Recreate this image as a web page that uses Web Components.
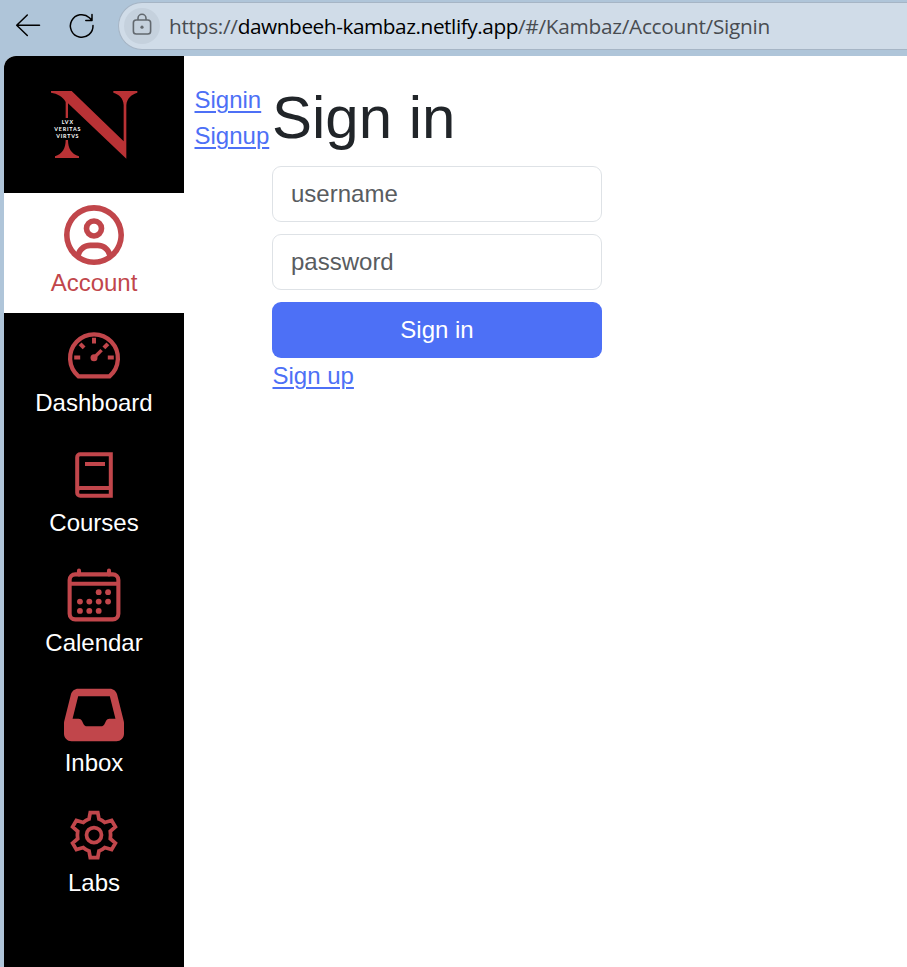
<!DOCTYPE html>
<html lang="en">
<head>
<meta charset="utf-8">
<title>Kambaz</title>
<style>
html,body{margin:0;height:100%;overflow:hidden}
body{font-family:"Liberation Sans",Arial,sans-serif;font-size:24px;line-height:36px;color:#212529;background:#afc5d9}
</style>
</head>
<body>
<kambaz-app></kambaz-app>
<script>
const define = (name, html) => customElements.define(name, class extends HTMLElement {
  constructor() {
    super();
    const t = document.createElement('template');
    t.innerHTML = html;
    this.attachShadow({ mode: 'open' }).appendChild(t.content.cloneNode(true));
  }
});

define('browser-bar', `<style>
:host{display:flex;height:56px;box-sizing:border-box;padding:2px 0 6px;background:#afc5d9;overflow:hidden}
.nav{flex:none;width:118px;height:48px}
.address{flex:1;display:flex;align-items:center;box-sizing:border-box;height:48px;border:1.5px solid #a6b5c5;border-right:0;border-radius:24px 0 0 24px;background:#d0dce8;padding-left:5px}
.lock{flex:none;width:36px;height:36px}
.url{margin-left:9px;font:20.8px/32px "Open Sans","Noto Sans",sans-serif;letter-spacing:-.28px;color:#484c51;white-space:nowrap}
b{font-weight:400;color:#000;letter-spacing:-.44px}
</style>
<svg class="nav" viewBox="0 2 118 48" fill="none" stroke="#000" stroke-width="1.5" stroke-linecap="round" stroke-linejoin="round"><path d="M39.5 25.2H16.8M27.3 15 16.7 25.2 27.3 35.5"/><path d="M93 25.5a11.3 11.3 0 1 1-3.6-7.8l2.5 2.6M92 14.6v5.9h-6.2"/></svg>
<div class="address">
<svg class="lock" viewBox="0 0 36 36" fill="none" stroke="#62686e" stroke-width="1.6"><circle cx="18" cy="18" r="18" fill="#c5d1dd" stroke="none"/><rect x="9.4" y="12" width="17.2" height="14" rx="2.8"/><path d="M14 12v-1.7a4 4 0 0 1 8 0v1.7"/><circle cx="18" cy="19.2" r="1.6" fill="#62686e" stroke="none"/></svg>
<span class="url">https://<b>dawnbeeh-kambaz.netlify.app</b>/#/Kambaz/Account/Signin</span>
</div>`);

define('brand-logo', `<style>
:host{display:block;height:137px;padding-left:36px;box-sizing:border-box;padding-top:24px}
svg{display:block;width:110px;height:90px}
text{font:700 16px "Lato",sans-serif;fill:#fff;text-anchor:middle}
</style>
<svg viewBox="0 0 330 270"><path fill="#b93235" d="M33 33H95L251 184V75C250 54 237 43 220 38V33H292V38C275 43 261 54 259 75V236L84 70V114H77V66C69 49 52 41 33 38ZM77 180H84C84 205 94 222 117 229V234H45V229C67 222 77 205 77 180Z"/>
<text x="82" y="133" textLength="34">LVX</text><text x="82" y="154" textLength="79">VERITAS</text><text x="82" y="174" textLength="67">VIRTVS</text></svg>`);

define('nav-item', `<style>
:host{display:flex;flex-direction:column;align-items:center;height:120px;box-sizing:border-box;padding-top:12px;color:#fff}
:host([active]){background:#fff;color:#c1464b}
.icon{width:60px;height:60px;color:#c1464b}
::slotted(svg){display:block;width:60px;height:60px}
</style><div class="icon"><slot name="icon"></slot></div><span><slot></slot></span>`);

define('side-nav', `<style>
:host{display:block;width:180px;background:#000;flex:none}
</style>
<brand-logo></brand-logo>
<nav-item active><svg slot="icon" viewBox="0 0 512 512" fill="currentColor"><path d="M406.5 399.6C387.4 352.9 341.5 320 288 320H224c-53.5 0-99.4 32.9-118.5 79.6C69.9 362.2 48 311.7 48 256C48 141.1 141.1 48 256 48s208 93.1 208 208c0 55.7-21.9 106.2-57.5 143.6zm-40.1 32.7C334.4 452.4 296.6 464 256 464s-78.4-11.6-110.5-31.7c7.3-36.7 39.7-64.3 78.5-64.3h64c38.8 0 71.2 27.6 78.5 64.3zM256 512A256 256 0 1 0 256 0a256 256 0 1 0 0 512zm0-272a40 40 0 1 1 0-80 40 40 0 1 1 0 80zm-88-40a88 88 0 1 0 176 0 88 88 0 1 0-176 0z"/></svg>Account</nav-item>
<nav-item><svg slot="icon" viewBox="0 0 60 60" fill="none" stroke="currentColor" stroke-width="4.3" stroke-linejoin="round"><path d="M14.5 51.4A23.9 23.9 0 1 1 45.5 51.4Z"/><path stroke-width="4" d="M30 12.8v5.8M10.2 32.5h6M43.8 32.5h6M16.1 18.8l4 4M43.9 18.8l-4 4"/><path stroke-width="3.4" d="M30 32.7l7.6-7.6"/><circle cx="30" cy="32.8" r="3.5" fill="currentColor" stroke="none"/></svg>Dashboard</nav-item>
<nav-item><svg slot="icon" viewBox="0 0 60 60" fill="none" stroke="currentColor" stroke-width="4"><path d="M46.8 9.2H16.2a3 3 0 0 0-3 3V47.8a3 3 0 0 0 3 3H46.8ZM46.8 43.1H16.2a3 3 0 0 0-3 3M21 18.9H41"/></svg>Courses</nav-item>
<nav-item><svg slot="icon" viewBox="0 0 512 512" fill="none" stroke="currentColor" stroke-width="35"><rect x="48" y="80" width="416" height="384" rx="48"/><path d="M48 160H464"/><path stroke-linecap="round" d="M128 48v32M384 48v32"/><g fill="currentColor" stroke="none"><circle cx="296" cy="232" r="25"/><circle cx="376" cy="232" r="25"/><circle cx="136" cy="312" r="25"/><circle cx="216" cy="312" r="25"/><circle cx="296" cy="312" r="25"/><circle cx="376" cy="312" r="25"/><circle cx="136" cy="392" r="25"/><circle cx="216" cy="392" r="25"/><circle cx="296" cy="392" r="25"/></g></svg>Calendar</nav-item>
<nav-item><svg slot="icon" viewBox="0 0 512 512" fill="currentColor"><path d="M121 32C91.6 32 66 52 58.9 80.5L1.9 308.4C.6 313.5 0 318.7 0 323.9V416c0 35.3 28.7 64 64 64H448c35.3 0 64-28.7 64-64V323.9c0-5.2-.6-10.4-1.9-15.5l-57-227.9C446 52 420.4 32 391 32H121zm0 64H391l48 192H387.8c-12.1 0-23.2 6.8-28.6 17.7l-14.3 28.6c-5.4 10.8-16.5 17.7-28.6 17.7H195.8c-12.1 0-23.2-6.8-28.6-17.7l-14.3-28.6c-5.4-10.8-16.5-17.7-28.6-17.7H73L121 96z"/></svg>Inbox</nav-item>
<nav-item><svg slot="icon" viewBox="0 0 32 32" fill="none" stroke="currentColor" stroke-width="2"><path d="M14 4H18L18.65 7.5Q20.3 8 21.7 9.3L25.4 8.2 27.4 11.7 24.7 14.05Q25 16 24.7 17.95L27.4 20.3 25.4 23.8 21.7 22.7Q20.3 24 18.65 24.5L18 28H14L13.35 24.5Q11.7 24 10.3 22.7L6.6 23.8 4.6 20.3 7.3 17.95Q7 16 7.3 14.05L4.6 11.7 6.6 8.2 10.3 9.3Q11.7 8 13.35 7.5Z"/><circle cx="16" cy="16" r="4"/></svg>Labs</nav-item>`);

define('account-nav', `<style>
:host{display:flex;flex-direction:column;width:78px;padding-top:26px;flex:none}
a{color:#4d70f6;text-decoration:underline;text-decoration-thickness:2px;text-underline-offset:3px;margin-left:10.5px}
</style><a>Signin</a><a>Signup</a>`);

define('text-field', `<style>
:host{display:block}
div{box-sizing:border-box;height:56px;border:1px solid #dee2e6;border-radius:9px;padding:9px 18px;color:#595c5f;background:#fff}
</style><div><slot></slot></div>`);

define('signin-form', `<style>
:host{display:flex;flex-direction:column;gap:12px;width:330px;padding-top:26px}
h1{margin:0;font-weight:400;font-size:60px;line-height:72px}
button{display:block;width:100%;height:56px;border:0;border-radius:9px;background:#4d70f6;color:#fff;font:inherit;padding:0}
a{color:#4d70f6;text-decoration:underline;text-decoration-thickness:2px;text-underline-offset:3px;margin:-12px 0 0 .5px}
</style><h1>Sign in</h1><text-field>username</text-field><text-field>password</text-field><button>Sign in</button><a>Sign up</a>`);

define('kambaz-app', `<style>
:host{display:flex;flex-direction:column;height:100vh}
main{flex:1;display:flex;margin-left:4px;background:#fff;border-top-left-radius:12px;overflow:hidden}
signin-form{margin-left:10px}
</style><browser-bar></browser-bar><main><side-nav></side-nav><account-nav></account-nav><signin-form></signin-form></main>`);
</script>
</body>
</html>
